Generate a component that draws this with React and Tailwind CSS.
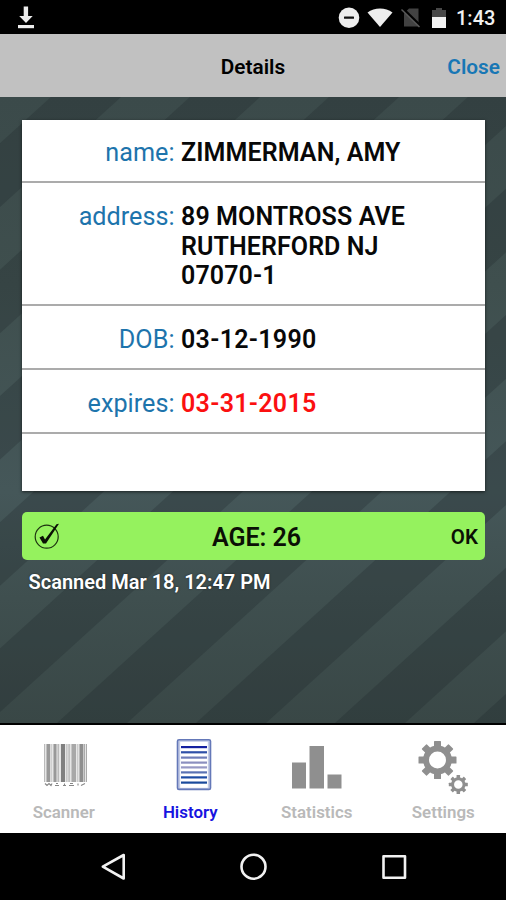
const rows = [
  { label: 'name:', lines: ['ZIMMERMAN, AMY'], height: 'h-[63px] pt-[18px]' },
  {
    label: 'address:',
    lines: ['89 MONTROSS AVE', 'RUTHERFORD NJ', '07070-1'],
    height: 'h-[123px] pt-[19px]',
  },
  { label: 'DOB:', lines: ['03-12-1990'], height: 'h-[64px] pt-[19px]', date: true },
  { label: 'expires:', lines: ['03-31-2015'], height: 'h-[64px] pt-[19px]', date: true, expired: true },
];

const stripes = [0, 1, 2, 3, 4, 5, 6, 7, 8, 9];

function StripedBackground() {
  return (
    <svg className="absolute inset-0 h-full w-full" viewBox="0 0 506 626" preserveAspectRatio="none">
      <defs>
        <linearGradient id="shade" x1="0" y1="0" x2="0" y2="1">
          <stop offset="0" stopColor="#3b4a4a" />
          <stop offset="0.3" stopColor="#3f4f4e" />
          <stop offset="0.63" stopColor="#455759" />
          <stop offset="0.8" stopColor="#3f4f4f" />
          <stop offset="1" stopColor="#394746" />
        </linearGradient>
      </defs>
      <rect width="506" height="626" fill="url(#shade)" />
      {stripes.map((i) => {
        const x = 51 + i * 139;
        return (
          <polygon
            key={i}
            points={`${x},0 ${x + 70},0 ${x - 619},626 ${x - 689},626`}
            fill="#1c2526"
            fillOpacity="0.25"
          />
        );
      })}
    </svg>
  );
}

function StatusBar() {
  return (
    <div className="flex h-[34px] shrink-0 items-center justify-between bg-black pl-[17px] pr-[10px] pt-px">
      <svg width="18" height="24" viewBox="0 0 18 24" fill="#ececec">
        <path d="M6.700 .5h4.400v9.500h4.600L9 17.100 2.200 10h4.500z" />
        <rect x="1" y="19" width="16" height="3.200" />
      </svg>
      <div className="flex items-center">
        <svg className="mr-[7px]" width="22" height="22" viewBox="0 0 22 22">
          <circle cx="11" cy="10.700" r="10.300" fill="#eee" />
          <rect x="6" y="9.500" width="10" height="2.200" rx="0.500" fill="#111" />
        </svg>
        <svg width="26" height="20" viewBox="0 0 26 20">
          <path d="M.5 4.500C7.500-1 18.500-1 25.500 4.500L13 19z" fill="#eee" />
        </svg>
        <svg className="ml-[8px]" width="20" height="20" viewBox="0 0 20 20">
          <path d="M8 .5h9.500v18H3V5.500z" fill="#424242" />
          <path d="M1 0L20 18.500" stroke="#000" strokeWidth="3" />
          <path d="M.5 1.500L18.500 19" stroke="#5a5a5a" strokeWidth="1.500" />
        </svg>
        <svg className="ml-[10px]" width="16" height="22" viewBox="0 0 16 22">
          <path d="M1 3h4V1h6v2h4v8H1z" fill="#484848" />
          <rect x="1" y="10" width="14" height="11" fill="#f2f2f2" />
        </svg>
        <span className="ml-[9px] w-[40px] whitespace-nowrap text-[20px] font-medium leading-6 text-[#f0f0f0]">1:43</span>
      </div>
    </div>
  );
}

function Header() {
  return (
    <header className="grid h-[63px] shrink-0 grid-cols-3 items-center bg-[#c1c1c1] pr-[6px] pt-[4px] text-[20.8px] font-semibold">
      <span />
      <h1 className="pl-[6px] text-center text-black">Details</h1>
      <button className="text-right text-[#1877b5]">Close</button>
    </header>
  );
}

function DetailsCard() {
  return (
    <section className="h-[371px] bg-white text-[25px] leading-[29.6px] shadow-[0_1px_3px_rgba(0,0,0,0.6)]">
      {rows.map((row) => (
        <div key={row.label} className={`flex border-b-2 border-[#ababab] ${row.height}`}>
          <span className="w-[152.5px] shrink-0 text-right text-[25.2px] text-[#1d74ac]">{row.label}</span>
          <div
            className={`pl-[6.5px] font-semibold ${row.expired ? 'text-[#fb1010]' : 'text-[#080808]'} ${
              row.date ? 'tracking-[0.3px]' : 'tracking-[0.1px]'
            }`}
          >
            {row.lines.map((line) => (
              <p key={line} className="whitespace-nowrap">{line}</p>
            ))}
          </div>
        </div>
      ))}
    </section>
  );
}

function AgeBar() {
  return (
    <div className="mt-[21px] grid h-[48px] grid-cols-3 items-center rounded-[5px] bg-[#95f25e] pl-[12px] pr-[7px] font-semibold text-[#0b1005]">
      <svg width="28" height="28" viewBox="0 0 28 28">
        <circle cx="12.700" cy="14.700" r="11.500" fill="none" stroke="#1d3210" strokeWidth="1.200" />
        <path d="M5.500 15.500L9 13.700l2 3.800L22.500 2.200l2.500-.5L12 21.500H9z" fill="#0b1005" />
      </svg>
      <span className="whitespace-nowrap pl-px pt-[3px] text-center text-[25px]">AGE: 26</span>
      <span className="pt-[2px] text-right text-[20.5px]">OK</span>
    </div>
  );
}

const bars = [
  [0, 1, '#bbb'], [2.5, 3.5, '#999'], [6.5, 1.5, '#d0d0d0'], [9.5, 3, '#999'],
  [13.5, 1.5, '#bbb'], [17, 4, '#808080'], [22, 1.5, '#c8c8c8'], [24.5, 1.2, '#b0b0b0'],
  [27.5, 4.5, '#a8a8a8'], [33, 1.2, '#ccc'], [35.5, 3.5, '#8f8f8f'], [39.5, 1.5, '#aaa'], [42, 1, '#aaa'],
];

function BarcodeIcon() {
  return (
    <svg width="44" height="44" viewBox="0 0 44 44">
      <rect width="43" height="38" fill="#e6e6e6" />
      {bars.map(([x, w, fill]) => (
        <rect key={x} x={x} width={w} height="38" fill={fill} />
      ))}
      <path
        d="M1 39.500l2 2 2-2 2 2 1-2M11 41.500h4M12 39.500h2M19 41.500h3M20.500 39.500v2M25 41.500h5M26 39.500h3M34 39.500v2M37 41.500l4-2"
        stroke="#888"
        strokeWidth="1.100"
        fill="none"
      />
    </svg>
  );
}

const docLines = [
  [7.5, '#1420a0'], [12.7, '#2f50a8'], [18, '#6f7db8'], [23, '#8b8fbf'],
  [27.8, '#9698c4'], [32.8, '#5a72b4'], [37.8, '#1c4ba4'], [43, '#1a4a9c'],
];

function DocumentIcon() {
  return (
    <svg width="36" height="52" viewBox="0 0 36 52">
      <rect x="1.500" y="0.800" width="33" height="49.600" rx="1.500" fill="#c3cbe6" stroke="#6478b8" strokeWidth="1.600" />
      <rect x="4.200" y="2.800" width="27.600" height="46" fill="#fff" />
      {docLines.map(([y, fill]) => (
        <rect key={y} x="5" y={y - 0.5} width="26" height="2.200" fill={fill} />
      ))}
    </svg>
  );
}

function ChartIcon() {
  return (
    <svg width="50" height="43" viewBox="0 0 50 43" fill="#8f8f8f">
      <rect x="0" y="16.500" width="14" height="26" />
      <rect x="17.500" y="0" width="14.500" height="42.500" />
      <rect x="35.500" y="28.500" width="14" height="14" />
    </svg>
  );
}

const teeth = [0, 45, 90, 135, 180, 225, 270, 315];

function Gear({ cx, cy, scale }) {
  return (
    <g transform={`translate(${cx} ${cy}) scale(${scale})`} fill="#8f8f8f">
      <circle r="11.500" fill="none" stroke="#8f8f8f" strokeWidth="6" />
      {teeth.map((angle) => (
        <rect key={angle} x="-3.500" y="-19" width="7" height="7" rx="0.600" transform={`rotate(${angle})`} />
      ))}
    </g>
  );
}

function GearsIcon() {
  return (
    <svg width="50" height="54" viewBox="0 0 50 54">
      <Gear cx={19.5} cy={19} scale={1} />
      <Gear cx={40.3} cy={43.6} scale={0.5} />
    </svg>
  );
}

const tabs = [
  { name: 'Scanner', icon: <BarcodeIcon />, pad: 'pl-[6px] pt-[5px]' },
  { name: 'History', icon: <DocumentIcon />, pad: 'pl-[8px]', active: true },
  { name: 'Statistics', icon: <ChartIcon />, pad: 'pl-[1px] pt-[7px]' },
  { name: 'Settings', icon: <GearsIcon />, pad: 'pl-[1px] pt-[2px]' },
];

function TabBar() {
  return (
    <nav className="grid h-[110px] shrink-0 grid-cols-4 border-t-2 border-black bg-white pt-[14px]">
      {tabs.map((tab) => (
        <button key={tab.name} className="flex flex-col items-center">
          <span className={`flex h-[61px] ${tab.pad}`}>{tab.icon}</span>
          <span className={`pl-px text-[16.9px] font-semibold leading-6 ${tab.active ? 'text-[#1714e0]' : 'text-[#b9b9b9]'}`}>
            {tab.name}
          </span>
        </button>
      ))}
    </nav>
  );
}

function SystemNav() {
  return (
    <div className="flex h-[67px] shrink-0 items-center justify-between bg-black pl-[99px] pr-[98px]">
      <svg width="28" height="28" viewBox="0 0 28 28" fill="none" stroke="#f2f2f2" strokeWidth="2.600" strokeLinejoin="round">
        <path d="M24.700 2v23.500L3.800 13.700z" />
      </svg>
      <svg width="28" height="28" viewBox="0 0 28 28" fill="none" stroke="#f2f2f2" strokeWidth="2.600">
        <circle cx="13.500" cy="13.700" r="12" />
      </svg>
      <svg width="28" height="28" viewBox="0 0 28 28" fill="none" stroke="#f2f2f2" strokeWidth="2.600" strokeLinejoin="round">
        <rect x="3.500" y="3.200" width="21.500" height="21.500" />
      </svg>
    </div>
  );
}

export default function App() {
  return (
    <div className="flex h-[900px] w-[506px] flex-col overflow-hidden bg-black font-[Roboto,sans-serif]">
      <StatusBar />
      <Header />
      <main className="relative flex-1 overflow-hidden">
        <StripedBackground />
        <div className="relative pl-[22px] pr-[21px] pt-[23px]">
          <DetailsCard />
          <AgeBar />
          <p className="pl-[6.5px] pt-[8px] text-[20px] font-semibold leading-7 text-white [text-shadow:0_0_2px_rgba(0,0,0,0.6)]">
            Scanned Mar 18, 12:47 PM
          </p>
        </div>
      </main>
      <TabBar />
      <SystemNav />
    </div>
  );
}
